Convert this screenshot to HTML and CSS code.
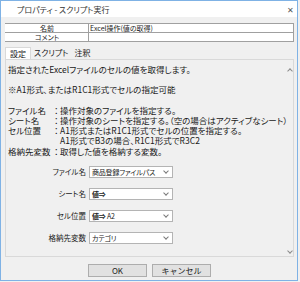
FILE: index.html
```html
<!DOCTYPE html>
<html lang="ja">
<head>
    <meta charset="UTF-8">
    <title>プロパティ - スクリプト実行</title>
    <link rel="stylesheet" href="styles.css">
</head>
<body>
    <div class="window">
        <!-- タイトルバー -->
        <div class="titlebar">
            <span class="title">プロパティ - スクリプト実行</span>
            <span class="close">✕</span>
        </div>

        <div class="dialog">
            <!-- 名前 / コメント -->
            <table class="info-table">
                <tr>
                    <th>名前</th>
                    <td>Excel操作(値の取得)</td>
                </tr>
                <tr>
                    <th>コメント</th>
                    <td></td>
                </tr>
            </table>

            <!-- タブ -->
            <div class="tabs">
                <div class="tab active">設定</div>
                <div class="tab">スクリプト</div>
                <div class="tab">注釈</div>
            </div>

            <div class="panel">
                <div class="scroll-area">
                    <div class="desc">
                        <p>指定されたExcelファイルのセルの値を取得します。</p>
                        <p>&nbsp;</p>
                        <p>※A1形式、またはR1C1形式でセルの指定可能</p>
                        <p>&nbsp;</p>
                        <p><span class="key">ファイル名</span><span class="colon">：</span>操作対象のファイルを指定する。</p>
                        <p><span class="key">シート名</span><span class="colon">：</span>操作対象のシートを指定する。（空の場合はアクティブなシート）</p>
                        <p><span class="key">セル位置</span><span class="colon">：</span>A1形式またはR1C1形式でセルの位置を指定する。</p>
                        <p class="indent">A1形式でB3の場合、R1C1形式でR3C2</p>
                        <p><span class="key">格納先変数</span><span class="colon">：</span>取得した値を格納する変数。</p>
                    </div>

                    <div class="form">
                        <div class="form-row">
                            <label>ファイル名</label>
                            <div class="combo"><span>商品登録ファイルパス</span><i class="chev"></i></div>
                        </div>
                        <div class="form-row">
                            <label>シート名</label>
                            <div class="combo"><span><b>値⇒</b></span><i class="chev"></i></div>
                        </div>
                        <div class="form-row">
                            <label>セル位置</label>
                            <div class="combo"><span><b>値⇒</b> A2</span><i class="chev"></i></div>
                        </div>
                        <div class="form-row">
                            <label>格納先変数</label>
                            <div class="combo"><span>カテゴリ</span><i class="chev"></i></div>
                        </div>
                    </div>
                </div>

                <!-- スクロールバー -->
                <div class="scrollbar">
                    <span class="arrow up"></span>
                    <span class="arrow down"></span>
                </div>
            </div>

            <!-- ボタン -->
            <div class="buttons">
                <button class="btn">OK</button>
                <button class="btn">キャンセル</button>
            </div>
        </div>
    </div>
</body>
</html>
```

FILE: styles.css
```css
* {
    margin: 0;
    padding: 0;
    box-sizing: border-box;
}

body {
    width: 300px;
    height: 282px;
    background-color: #f0f0f0;
    font-family: "Noto Sans CJK JP", "Noto Sans", sans-serif;
    font-feature-settings: "palt";
    color: #1a1a1a;
    overflow: hidden;
}

/* ウィンドウ */
.window {
    width: 298px;
    height: 281px;
    border: 1px solid #7fb2e5;
    background-color: #f0f0f0;
    display: flex;
    flex-direction: column;
}

.titlebar {
    height: 16px;
    background-color: #ffffff;
    display: flex;
    align-items: center;
    justify-content: space-between;
    padding: 0 3px 0 16px;
}

.title {
    font-size: 8px;
    color: #333333;
}

.close {
    font-size: 8px;
    color: #555555;
}

.dialog {
    flex: 1;
    display: flex;
    flex-direction: column;
    padding: 0 3px 0 4px;
}

/* 名前・コメント表 */
.info-table {
    margin-top: 6px;
    width: 289px;
    border-collapse: collapse;
    background-color: #ffffff;
    font-size: 7px;
    line-height: 8px;
}

.info-table th,
.info-table td {
    height: 9px;
    border: 1px solid #a0a0a0;
    padding: 0 1px;
    font-weight: normal;
}

.info-table th {
    width: 83px;
    text-align: center;
    border-left-color: #ffffff;
}

/* タブ */
.tabs {
    display: flex;
    margin-top: 5px;
    height: 12px;
    font-size: 8px;
    line-height: 11px;
}

.tab {
    padding: 0 3px;
    color: #1a1a1a;
}

.tab.active {
    background-color: #ffffff;
    border: 1px solid #d9d9d9;
    border-bottom: none;
    padding: 0 4px;
}

.panel {
    height: 198px;
    width: 289px;
    border: 1px solid #d9d9d9;
    display: flex;
}

.scroll-area {
    flex: 1;
    padding: 4px 0 0 2px;
}

.desc {
    font-size: 8.5px;
    line-height: 10.2px;
    white-space: nowrap;
}

.desc .key {
    display: inline-block;
    width: 44px;
}

.desc .colon {
    display: inline-block;
    width: 8px;
    font-feature-settings: normal;
}

.desc .indent {
    padding-left: 52px;
}

/* 入力欄 */
.form {
    margin-top: 10px;
    display: flex;
    flex-direction: column;
    gap: 10px;
}

.form-row {
    display: flex;
    align-items: center;
    gap: 3px;
}

.form-row label {
    width: 78px;
    text-align: right;
    font-size: 7.5px;
}

.combo {
    width: 84px;
    height: 12px;
    background-color: #ffffff;
    border: 1px solid #b4b4b4;
    display: flex;
    align-items: center;
    justify-content: space-between;
    padding: 0 4px 0 2px;
    font-size: 7px;
    letter-spacing: -0.2px;
    white-space: nowrap;
}

.combo b {
    font-weight: bold;
}

.chev {
    flex-shrink: 0;
    width: 4px;
    height: 4px;
    border-right: 1px solid #7a7a7a;
    border-bottom: 1px solid #7a7a7a;
    transform: rotate(45deg);
    margin-top: -2px;
}

/* スクロールバー */
.scrollbar {
    width: 11px;
    display: flex;
    flex-direction: column;
    justify-content: space-between;
    align-items: center;
    padding: 9px 0 3px;
}

.arrow {
    width: 4px;
    height: 4px;
    border-left: 1px solid #8a8a8a;
    border-top: 1px solid #8a8a8a;
}

.arrow.up {
    transform: rotate(45deg);
}

.arrow.down {
    transform: rotate(225deg);
}

/* ボタン */
.buttons {
    display: flex;
    justify-content: center;
    gap: 5px;
    margin-top: 7px;
}

.btn {
    width: 59px;
    height: 13px;
    background-color: #e1e1e1;
    border: 1px solid #adadad;
    font-family: inherit;
    font-size: 8px;
    line-height: 11px;
    color: #1a1a1a;
}
```
